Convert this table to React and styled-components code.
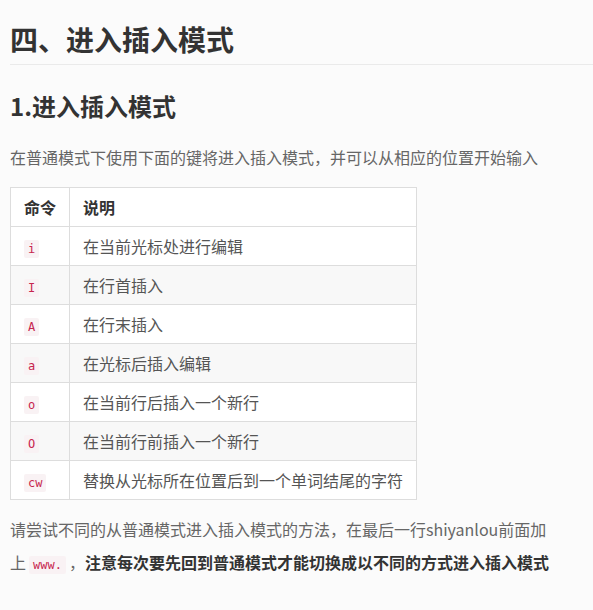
import styled, { createGlobalStyle } from "styled-components";

const GlobalStyle = createGlobalStyle`
  html, body {
    margin: 0;
    padding: 0;
    background: #fbfbfb;
  }
  body {
    font-family: "Noto Sans CJK SC", "Open Sans", sans-serif;
    color: #666;
  }
`;

const Article = styled.div`
  padding: 0 0 0 10px;
`;

const H1 = styled.h1`
  margin: 0;
  padding: 20px 0 6px;
  font-size: 28px;
  line-height: 38px;
  font-weight: 700;
  color: #333;
  border-bottom: 1px solid #eaeaea;
`;

const H2 = styled.h2`
  margin: 0;
  padding: 24px 0 0;
  font-size: 24px;
  line-height: 34px;
  font-weight: 700;
  color: #333;
`;

const Para = styled.p`
  margin: ${(p) => p.$mt || 0}px 0 0;
  max-width: 540px;
  font-size: 16px;
  line-height: ${(p) => p.$lh || 26}px;
  color: #666;
`;

const Strong = styled.strong`
  color: #333;
  font-weight: 700;
`;

const Code = styled.code`
  font-family: "DejaVu Sans Mono", "Liberation Mono", monospace;
  font-size: 12px;
  line-height: 1;
  color: #c7254e;
  background: #f9f2f4;
  padding: 2px 4px;
  margin: 0 ${(p) => p.$gap || 0}px;
  border-radius: 2px;
`;

const Table = styled.table`
  margin-top: 17px;
  border-collapse: collapse;
  background: #fff;
  font-size: 16px;
  color: #555;
`;

const Row = styled.tr`
  background: ${(p) => (p.$alt ? "#f8f8f8" : "#fff")};
`;

const Th = styled.th`
  border: 1px solid #ddd;
  padding: 7px 13px;
  line-height: 24px;
  text-align: left;
  font-weight: 700;
  color: #333;
`;

const Td = styled.td`
  border: 1px solid #ddd;
  padding: 7px 13px;
  line-height: 24px;
  white-space: nowrap;
`;

const rows = [
  ["i", "在当前光标处进行编辑"],
  ["I", "在行首插入"],
  ["A", "在行末插入"],
  ["a", "在光标后插入编辑"],
  ["o", "在当前行后插入一个新行"],
  ["O", "在当前行前插入一个新行"],
  ["cw", "替换从光标所在位置后到一个单词结尾的字符"],
];

export default function App() {
  return (
    <>
      <GlobalStyle />
      <Article>
        <H1>四、进入插入模式</H1>
        <H2>1.进入插入模式</H2>
        <Para $mt={21}>
          在普通模式下使用下面的键将进入插入模式，并可以从相应的位置开始输入
        </Para>
        <Table>
          <thead>
            <Row>
              <Th>命令</Th>
              <Th>说明</Th>
            </Row>
          </thead>
          <tbody>
            {rows.map(([cmd, desc], i) => (
              <Row key={cmd} $alt={i % 2 === 1}>
                <Td>
                  <Code>{cmd}</Code>
                </Td>
                <Td>{desc}</Td>
              </Row>
            ))}
          </tbody>
        </Table>
        <Para $mt={13} $lh={33}>
          <span>请尝试不同的从普通模式进入插入模式的方法，在最后一行shiyanlou前面加</span>
          <span>上</span>
          <Code $gap={3}>www.</Code>，
          <Strong>注意每次要先回到普通模式才能切换成以不同的方式进入插入模式</Strong>
        </Para>
      </Article>
    </>
  );
}
